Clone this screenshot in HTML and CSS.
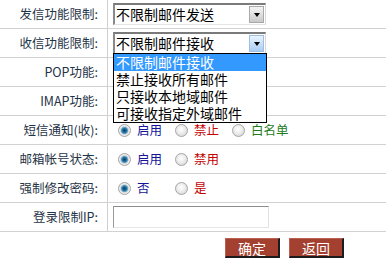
FILE: index.html
```html
<!DOCTYPE html>
<html lang="zh-CN">
<head>
<meta charset="utf-8">
<title>邮箱设置</title>
<link rel="stylesheet" href="styles.css">
</head>
<body>
<table class="form">
  <tr>
    <th>发信功能限制:</th>
    <td>
      <div class="sel"><span class="sel-text">不限制邮件发送</span><span class="sel-btn"><i class="tri"></i></span></div>
    </td>
  </tr>
  <tr>
    <th>收信功能限制:</th>
    <td>
      <div class="sel open"><span class="sel-text">不限制邮件接收</span><span class="sel-btn"><i class="tri"></i></span>
        <ul class="list">
          <li class="hl">不限制邮件接收</li>
          <li>禁止接收所有邮件</li>
          <li>只接收本地域邮件</li>
          <li>可接收指定外域邮件</li>
        </ul>
      </div>
    </td>
  </tr>
  <tr>
    <th>POP功能:</th>
    <td></td>
  </tr>
  <tr>
    <th>IMAP功能:</th>
    <td></td>
  </tr>
  <tr>
    <th>短信通知(收):</th>
    <td>
      <div class="opts">
        <span class="opt"><i class="radio on"></i><span class="t-blue">启用</span></span>
        <span class="opt"><i class="radio"></i><span class="t-red">禁止</span></span>
        <span class="opt"><i class="radio"></i><span class="t-green">白名单</span></span>
      </div>
    </td>
  </tr>
  <tr>
    <th>邮箱帐号状态:</th>
    <td>
      <div class="opts">
        <span class="opt"><i class="radio on"></i><span class="t-blue">启用</span></span>
        <span class="opt"><i class="radio"></i><span class="t-red">禁用</span></span>
      </div>
    </td>
  </tr>
  <tr>
    <th>强制修改密码:</th>
    <td>
      <div class="opts">
        <span class="opt"><i class="radio on"></i><span class="t-blue">否</span></span>
        <span class="opt"><i class="radio"></i><span class="t-red">是</span></span>
      </div>
    </td>
  </tr>
  <tr>
    <th>登录限制IP:</th>
    <td><div class="ip"></div></td>
  </tr>
</table>
<div class="actions">
  <button class="btn">确定</button>
  <button class="btn">返回</button>
</div>
</body>
</html>
```
FILE: styles.css
```css
html, body {
  margin: 0;
  padding: 0;
  background: #fff;
}
body {
  font-family: "Noto Sans CJK SC", "Liberation Sans", sans-serif;
  width: 386px;
  height: 263px;
  overflow: hidden;
}
.form {
  width: 100%;
  border-collapse: separate;
  border-spacing: 0;
}
.form th, .form td {
  height: 28px;
  padding: 0;
  border-bottom: 1px solid #d2d2d2;
  vertical-align: middle;
}
.form th {
  box-sizing: border-box;
  width: 108px;
  text-align: right;
  padding-right: 9px;
  border-right: 1px solid #cfcfcf;
  font-weight: normal;
  font-size: 12.5px;
  line-height: 16px;
  color: #1f3447;
  white-space: nowrap;
}
.form td {
  padding-left: 5px;
}

/* select */
.sel {
  position: relative;
  box-sizing: border-box;
  width: 153px;
  height: 22px;
  display: flex;
  align-items: stretch;
  border-top: 2px solid #7a7a7a;
  border-left: 2px solid #8a8a8a;
  border-right: 1px solid #d8d8d8;
  border-bottom: 1px solid #e4e4e4;
  background: #fff;
}
.sel-text {
  flex: 1;
  font-size: 14px;
  line-height: 18px;
  padding-left: 1px;
  color: #000;
  white-space: nowrap;
}
.sel-btn {
  box-sizing: border-box;
  width: 15px;
  margin: 1px 1px 1px 0;
  border: 1px solid #a9a9a9;
  background: linear-gradient(#f4f4f4, #c9c9c9);
  display: flex;
  align-items: center;
  justify-content: center;
}
.open .sel-btn {
  border-color: #9fbfe0;
  background: linear-gradient(#eaf4ff, #a9cdf2);
}
.tri {
  width: 0;
  height: 0;
  border-left: 3.5px solid transparent;
  border-right: 3.5px solid transparent;
  border-top: 4px solid #000;
}
.list {
  position: absolute;
  left: -2px;
  top: 19px;
  width: 154px;
  box-sizing: border-box;
  margin: 0;
  padding: 0;
  list-style: none;
  border: 1px solid #000;
  background: #fff;
  z-index: 5;
}
.list li {
  font-size: 14px;
  line-height: 17px;
  height: 17px;
  padding-left: 2px;
  color: #000;
  white-space: nowrap;
}
.list li.hl {
  background: #3399ff;
  color: #fff;
}

/* radios */
.opts {
  display: flex;
  align-items: center;
  white-space: nowrap;
}
.opt {
  flex: none;
  display: inline-flex;
  align-items: center;
  min-width: 57px;
  font-size: 12.5px;
  line-height: 16px;
  white-space: nowrap;
}
.radio {
  flex: none;
  box-sizing: border-box;
  width: 13px;
  height: 13px;
  margin: 0 6px 0 5px;
  border-radius: 50%;
  border: 1px solid #a4a4a4;
  background: radial-gradient(circle at 45% 40%, #ffffff 0, #ececec 45%, #cfcfcf 100%);
}
.radio.on {
  background: radial-gradient(circle at 50% 50%, #0b3c5a 0, #1f6f9c 2px, #5fa2c8 3.2px, #d8d8d8 4px, #eeeeee 5px, #cfcfcf 100%);
}
.t-blue { color: #14149a; }
.t-red { color: #c40000; }
.t-green { color: #1d7d1d; }

/* ip input */
.ip {
  box-sizing: border-box;
  width: 156px;
  height: 22px;
  border-top: 1px solid #8c8c8c;
  border-left: 1px solid #9a9a9a;
  border-right: 1px solid #e2e2e2;
  border-bottom: 1px solid #e6e6e6;
  background: #fff;
}

/* buttons */
.actions {
  display: flex;
  gap: 9px;
  padding: 6px 0 0 225px;
}
.btn {
  box-sizing: border-box;
  width: 55px;
  height: 20px;
  padding: 0;
  margin: 0;
  font-family: "Noto Sans CJK SC", sans-serif;
  font-size: 14px;
  line-height: 16px;
  color: #fff;
  background: #a3402f;
  border-top: 1px solid #b9604e;
  border-left: 1px solid #b9604e;
  border-right: 2px solid #1c1c1c;
  border-bottom: 2px solid #1c1c1c;
}
```
